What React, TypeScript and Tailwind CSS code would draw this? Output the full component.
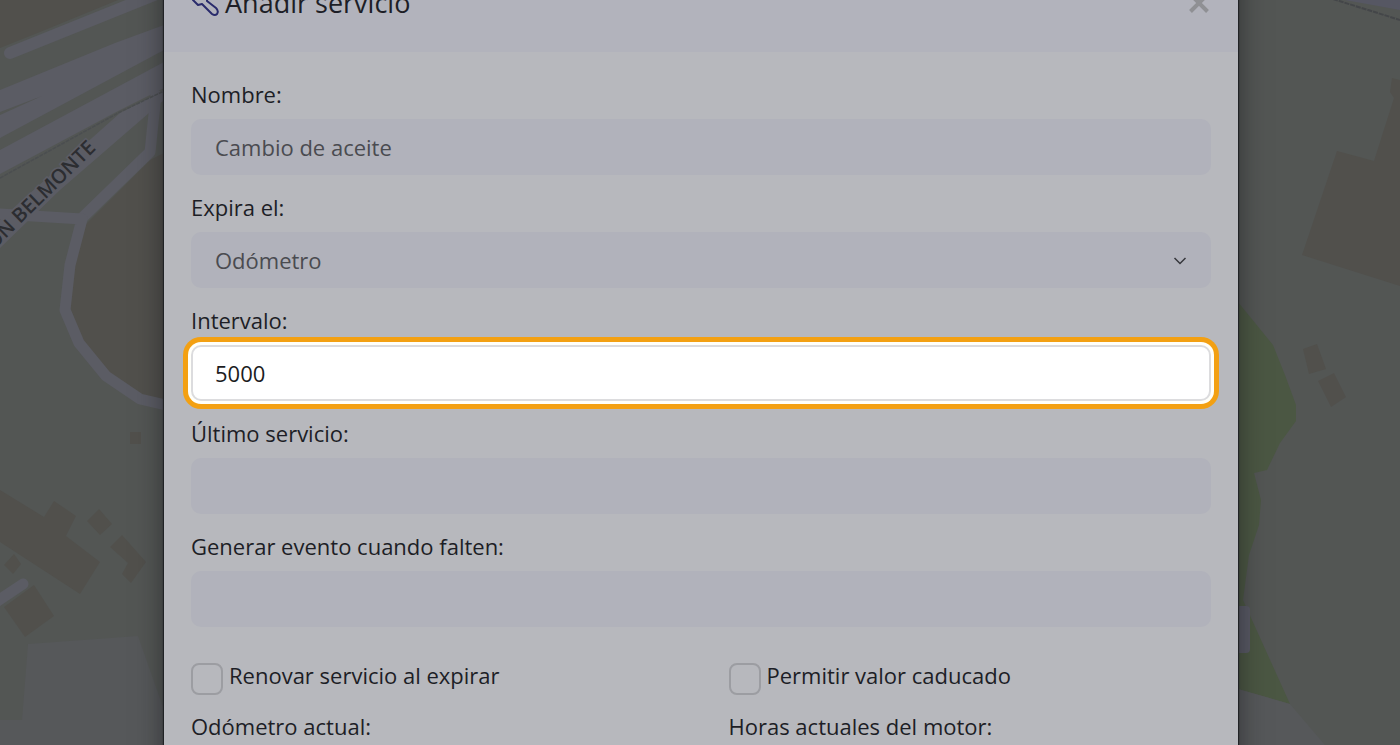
import type { ReactNode } from 'react';

const fieldClass =
  'block h-14 w-full appearance-none rounded-[10px] border-0 bg-[#b1b2bb] px-6 text-[22px] text-[#4a4b50] outline-none';

function Field({ id, label, children }: { id: string; label: string; children: ReactNode }) {
  return (
    <div>
      <label htmlFor={id} className="mb-2 block leading-[33px]">
        {label}
      </label>
      {children}
    </div>
  );
}

function Check({ id, label }: { id: string; label: string }) {
  return (
    <div className="flex items-center gap-1.5">
      <input
        id={id}
        type="checkbox"
        className="size-8 shrink-0 appearance-none rounded-lg border-2 border-[#9c9da2] bg-transparent"
      />
      <label htmlFor={id} className="pb-1.5 leading-[33px]">
        {label}
      </label>
    </div>
  );
}

function MapBackground() {
  return (
    <svg
      aria-hidden="true"
      className="absolute inset-0 h-full w-full"
      viewBox="0 0 1400 745"
      preserveAspectRatio="xMidYMin slice"
    >
      <rect width="1400" height="745" fill="#535654" />
      <path d="M0 0H118L40 32L0 48Z" fill="#51504c" />
      <path d="M164 153L150 160L82 228L70 260L66 310L80 345L106 379L140 400L164 405Z" fill="#51504c" />
      <g fill="none" stroke="#5b5c64" strokeLinecap="round" strokeLinejoin="round">
        <path d="M10 53L164 -9" strokeWidth="12" />
        <path d="M156 95L150 152L82 218" strokeWidth="11" />
        <path d="M0 214L82 219L70 265L65 310L79 343L106 376L140 399L170 406" strokeWidth="11" />
      </g>
      <g fill="#5b5c64">
        <path d="M0 90L115 43L164 25V50L0 138V115L42 96L0 112Z" />
        <path d="M0 150L164 62V88L120 110L0 174Z" />
        <path d="M164 90L120 113L0 220V248L60 190L164 100Z" />
      </g>
      <path d="M0 178L120 112L164 91" fill="none" stroke="#4b4e50" strokeWidth="1.5" strokeDasharray="4 1" />
      <text
        transform="translate(-6 250) rotate(-44.5)"
        fill="#2c2d31"
        stroke="#5b5c64"
        strokeWidth="3"
        paintOrder="stroke"
        className="font-['Open_Sans',sans-serif] text-[20px] font-semibold"
      >
        ON BELMONTE
      </text>
      <g fill="#51504c">
        <path d="M0 490L44 517L54 501L76 516L66 536L100 562L80 594L0 542Z" />
        <path d="M99 509L112 524L100 535L87 521Z" />
        <path d="M122 535L146 562L131 583L122 574L128 563L110 547Z" />
        <path d="M130 432H141V444H130Z" />
        <path d="M14 554L21 564L13 574L4 565Z" />
        <path d="M34 585L54 616L25 637L4 607Z" />
        <path d="M1337 151L1374 161L1394 98L1390 92L1392 78L1400 80V286L1302 255Z" />
        <path d="M1303 349L1317 344L1326 369L1309 374Z" />
        <path d="M1318 381L1334 373L1346 397L1331 407Z" />
      </g>
      <path d="M28 644L138 636L164 710V745H0V720H22Z" fill="#56585a" />
      <path d="M-4 602L23 584" stroke="#5b5c64" strokeWidth="11" strokeLinecap="round" />
      <path d="M1238 302L1273 345L1285 375L1296 405V421L1280 443L1267 470L1254 473L1261 500L1259 525L1249 555L1243 600L1290 704L1238 689Z" fill="#4b5743" />
      <path d="M1238 689L1290 704L1325 745H1238Z" fill="#56585a" />
      <rect x="1228" y="606" width="22" height="47" rx="4" fill="#585964" />
      <path d="M1345 0H1400V10Z" fill="#565763" />
      <path d="M1333 -1L1400 20" stroke="#444649" strokeWidth="2" strokeDasharray="5 1" />
    </svg>
  );
}

export default function App() {
  return (
    <div className="relative h-screen overflow-hidden bg-[#535654] pl-0.5 font-['Open_Sans',sans-serif] text-[22px] text-[#1d1e26]">
      <MapBackground />
      <main
        role="dialog"
        aria-labelledby="dialog-title"
        className="relative mx-auto min-h-screen w-full max-w-[1074px] bg-[#b7b8bd] shadow-[0_0_1px_1px_#202225,0_0_24px_2px_rgba(20,20,24,0.5)]"
      >
        <header className="-mt-[46px] flex h-[98px] items-center justify-between bg-[#b2b3bc] px-[27px]">
          <div className="flex items-center gap-1.5">
            <svg aria-hidden="true" viewBox="0 0 28 28" className="size-7" fill="none" stroke="#292b6c" strokeWidth="2" strokeLinejoin="round">
              <path d="M8 2L2 6V11L7 16L11 15L21 25Q24 27 26 25Q28 22 25 19L16 12V7L12 2V8L9 10L7 8Z" />
            </svg>
            <h1 id="dialog-title" className="text-[27px] leading-9">
              Añadir servicio
            </h1>
          </div>
          <button type="button" aria-label="Cerrar" className="flex size-6 items-center justify-center text-[#8f9094]">
            <svg aria-hidden="true" viewBox="0 0 20 20" className="size-5" fill="none" stroke="currentColor" strokeWidth="4">
              <path d="M1.5 1.5L18.5 18.5M18.5 1.5L1.5 18.5" />
            </svg>
          </button>
        </header>

        <form className="flex flex-col gap-4 px-[27px] pt-[26px]">
          <Field id="name" label="Nombre:">
            <input id="name" type="text" defaultValue="Cambio de aceite" className={fieldClass} />
          </Field>
          <Field id="expires" label="Expira el:">
            <div className="relative">
              <select id="expires" className={fieldClass}>
                <option>Odómetro</option>
              </select>
              <svg
                aria-hidden="true"
                viewBox="0 0 14 14"
                className="pointer-events-none absolute top-1/2 right-6 size-3.5 -translate-y-1/2"
                fill="none"
                stroke="#36373c"
                strokeWidth="1.5"
              >
                <path d="M1.5 5L7 10.5L12.5 5" />
              </svg>
            </div>
          </Field>
          <Field id="interval" label="Intervalo:">
            <input
              id="interval"
              type="text"
              defaultValue="5000"
              className="block h-14 w-full rounded-[10px] border-2 border-[#dcdcde] bg-white px-[22px] text-[22px] text-[#1c1c1e] shadow-[0_0_0_3px_#fffffa,0_0_0_8px_#f3a012] outline-none"
            />
          </Field>
          <Field id="last" label="Último servicio:">
            <input id="last" type="text" className={fieldClass} />
          </Field>
          <Field id="remaining" label="Generar evento cuando falten:">
            <input id="remaining" type="text" className={fieldClass} />
          </Field>
          <div className="grid grid-cols-2 gap-x-[55px] gap-y-3 pt-4">
            <Check id="renew" label="Renovar servicio al expirar" />
            <Check id="expired" label="Permitir valor caducado" />
            <label htmlFor="odometer" className="leading-[33px]">
              Odómetro actual:
            </label>
            <label htmlFor="hours" className="leading-[33px]">
              Horas actuales del motor:
            </label>
            <input id="odometer" type="text" className={fieldClass} />
            <input id="hours" type="text" className={fieldClass} />
          </div>
        </form>
      </main>
    </div>
  );
}
